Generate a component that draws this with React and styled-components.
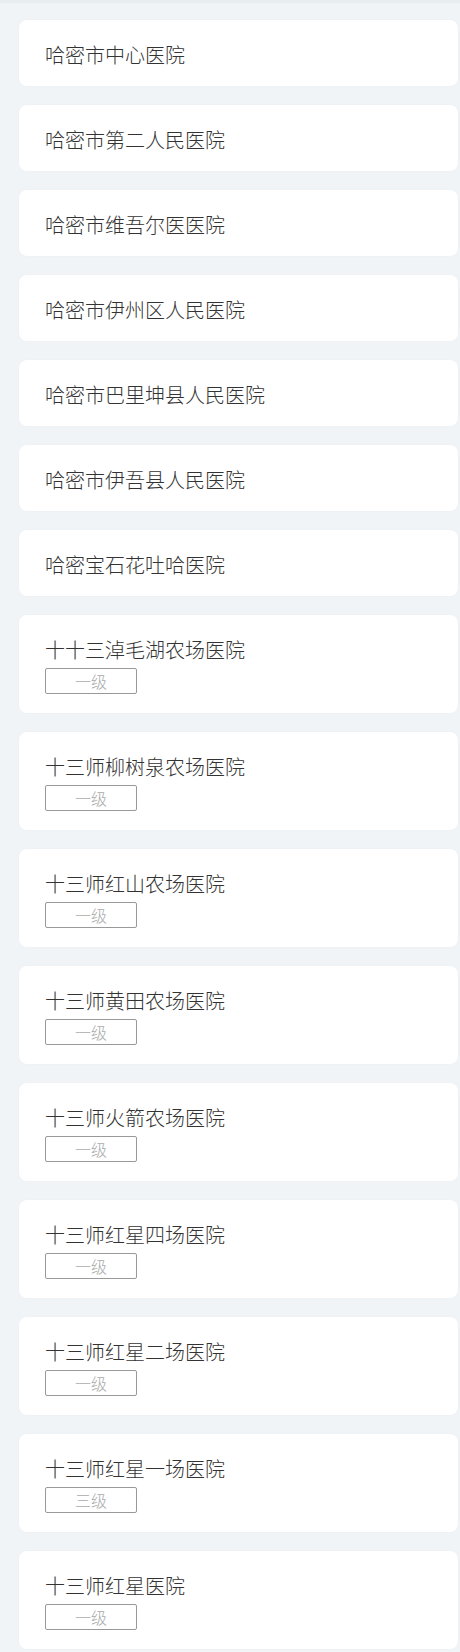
import React from "react";
import styled, { createGlobalStyle } from "styled-components";

const GlobalStyle = createGlobalStyle`
  html, body {
    margin: 0;
    padding: 0;
    background: #f0f4f7;
    font-family: "Noto Sans CJK SC", "Noto Sans", sans-serif;
  }
`;

const Page = styled.div`
  min-height: 1652px;
  box-sizing: border-box;
  border-top: 3px solid #e8edf0;
  padding: 17px 2px 0 19px;
  display: flex;
  flex-direction: column;
  gap: 19px;
`;

const Card = styled.div`
  background: #fff;
  border-radius: 8px;
  padding: 23px 26px 19px;
  display: flex;
  flex-direction: column;
  align-items: flex-start;
  box-shadow: 0 0 2px rgba(0, 0, 0, 0.03);
`;

const Name = styled.div`
  font-size: 20px;
  font-weight: 300;
  line-height: 24px;
  color: #333;
`;

const Level = styled.div`
  margin-top: 6px;
  width: 92px;
  height: 26px;
  box-sizing: border-box;
  border: 1px solid #999;
  border-radius: 2px;
  font-size: 16px;
  font-weight: 300;
  line-height: 24px;
  text-align: center;
  color: #aaa;
`;

const hospitals = [
  { name: "哈密市中心医院" },
  { name: "哈密市第二人民医院" },
  { name: "哈密市维吾尔医医院" },
  { name: "哈密市伊州区人民医院" },
  { name: "哈密市巴里坤县人民医院" },
  { name: "哈密市伊吾县人民医院" },
  { name: "哈密宝石花吐哈医院" },
  { name: "十十三淖毛湖农场医院", level: "一级" },
  { name: "十三师柳树泉农场医院", level: "一级" },
  { name: "十三师红山农场医院", level: "一级" },
  { name: "十三师黄田农场医院", level: "一级" },
  { name: "十三师火箭农场医院", level: "一级" },
  { name: "十三师红星四场医院", level: "一级" },
  { name: "十三师红星二场医院", level: "一级" },
  { name: "十三师红星一场医院", level: "三级" },
  { name: "十三师红星医院", level: "一级" },
];

export default function App() {
  return (
    <>
      <GlobalStyle />
      <Page>
        {hospitals.map((h, i) => (
          <Card key={i}>
            <Name>{h.name}</Name>
            {h.level && <Level>{h.level}</Level>}
          </Card>
        ))}
      </Page>
    </>
  );
}
